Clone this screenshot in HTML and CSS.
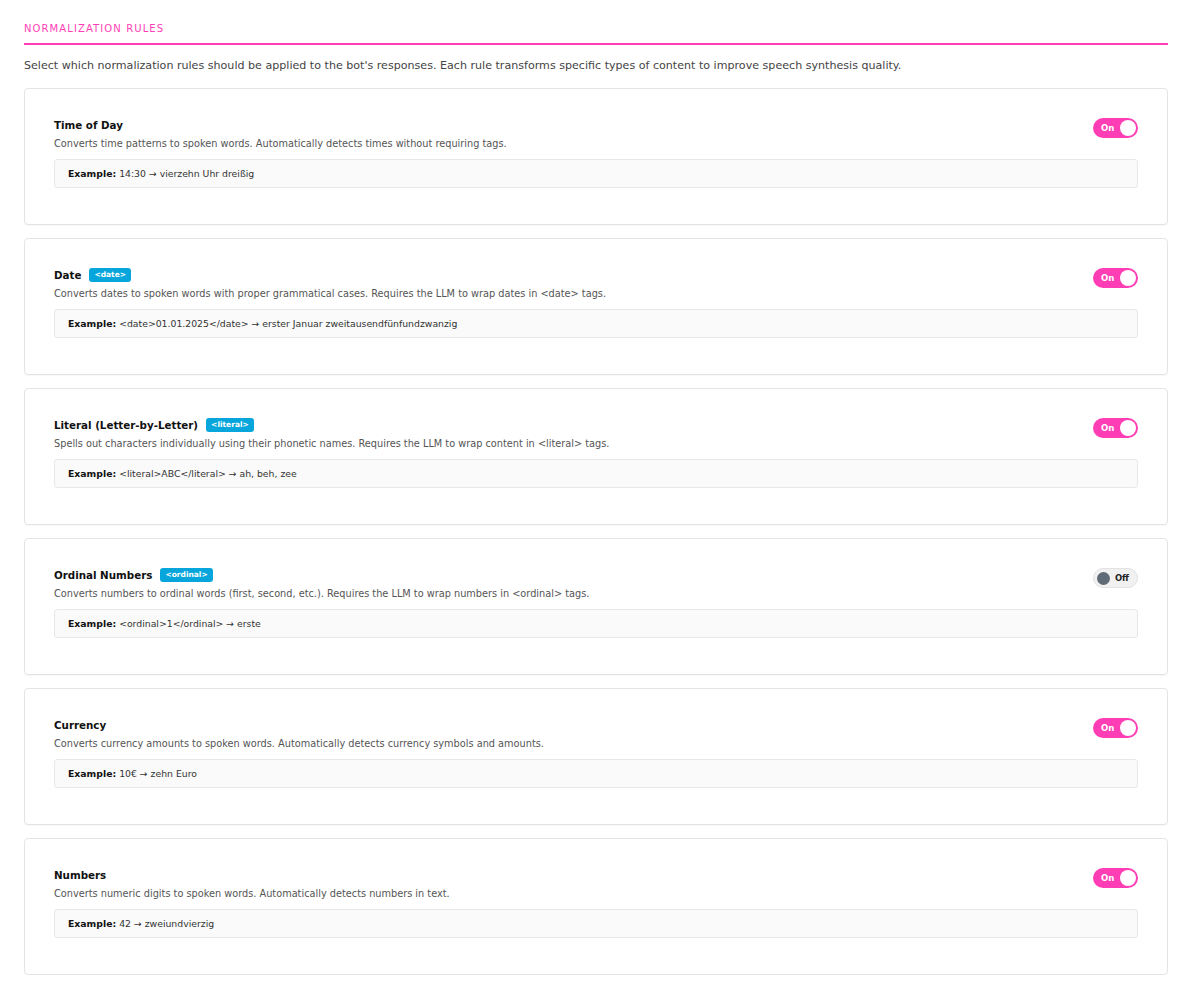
FILE: index.html
```html
<!DOCTYPE html>
<html lang="en">
  <head>
    <meta charset="UTF-8" />
    <meta name="viewport" content="width=device-width, initial-scale=1.0" />
    <title>Normalization Rules</title>
    <link rel="stylesheet" href="styles.css">
  </head>
  <body>
    <div class="page">
      <!-- Section header -->
      <h2 class="section-title">Normalization Rules</h2>
      <p class="section-desc">
        Select which normalization rules should be applied to the bot's responses. Each rule transforms specific types of content to improve speech synthesis quality.
      </p>

      <div class="rule-list">
        <div class="rule-card">
          <div class="rule-head">
            <div class="rule-info">
              <div class="rule-title">Time of Day</div>
              <div class="rule-text">Converts time patterns to spoken words. Automatically detects times without requiring tags.</div>
            </div>
            <button class="toggle on"><span class="toggle-label">On</span><span class="knob"></span></button>
          </div>
          <div class="example"><b>Example:</b> 14:30 → vierzehn Uhr dreißig</div>
        </div>

        <div class="rule-card">
          <div class="rule-head">
            <div class="rule-info">
              <div class="rule-title">Date <span class="tag">&lt;date&gt;</span></div>
              <div class="rule-text">Converts dates to spoken words with proper grammatical cases. Requires the LLM to wrap dates in &lt;date&gt; tags.</div>
            </div>
            <button class="toggle on"><span class="toggle-label">On</span><span class="knob"></span></button>
          </div>
          <div class="example"><b>Example:</b> &lt;date&gt;01.01.2025&lt;/date&gt; → erster Januar zweitausendfünfundzwanzig</div>
        </div>

        <div class="rule-card">
          <div class="rule-head">
            <div class="rule-info">
              <div class="rule-title">Literal (Letter-by-Letter) <span class="tag">&lt;literal&gt;</span></div>
              <div class="rule-text">Spells out characters individually using their phonetic names. Requires the LLM to wrap content in &lt;literal&gt; tags.</div>
            </div>
            <button class="toggle on"><span class="toggle-label">On</span><span class="knob"></span></button>
          </div>
          <div class="example"><b>Example:</b> &lt;literal&gt;ABC&lt;/literal&gt; → ah, beh, zee</div>
        </div>

        <div class="rule-card">
          <div class="rule-head">
            <div class="rule-info">
              <div class="rule-title">Ordinal Numbers <span class="tag">&lt;ordinal&gt;</span></div>
              <div class="rule-text">Converts numbers to ordinal words (first, second, etc.). Requires the LLM to wrap numbers in &lt;ordinal&gt; tags.</div>
            </div>
            <button class="toggle off"><span class="knob"></span><span class="toggle-label">Off</span></button>
          </div>
          <div class="example"><b>Example:</b> &lt;ordinal&gt;1&lt;/ordinal&gt; → erste</div>
        </div>

        <div class="rule-card">
          <div class="rule-head">
            <div class="rule-info">
              <div class="rule-title">Currency</div>
              <div class="rule-text">Converts currency amounts to spoken words. Automatically detects currency symbols and amounts.</div>
            </div>
            <button class="toggle on"><span class="toggle-label">On</span><span class="knob"></span></button>
          </div>
          <div class="example"><b>Example:</b> 10€ → zehn Euro</div>
        </div>

        <div class="rule-card">
          <div class="rule-head">
            <div class="rule-info">
              <div class="rule-title">Numbers</div>
              <div class="rule-text">Converts numeric digits to spoken words. Automatically detects numbers in text.</div>
            </div>
            <button class="toggle on"><span class="toggle-label">On</span><span class="knob"></span></button>
          </div>
          <div class="example"><b>Example:</b> 42 → zweiundvierzig</div>
        </div>
      </div>
    </div>
  </body>
</html>
```

FILE: styles.css
```css
/* Base */
body {
  margin: 0;
  background: #ffffff;
  font-family: 'DejaVu Sans', 'Noto Sans', sans-serif;
  color: #1a1a1a;
}

.page {
  padding: 22px 16px 0 24px;
}

/* Section header */
.section-title {
  margin: 0;
  color: #ff3eb5;
  font-size: 10px;
  font-weight: normal;
  letter-spacing: 1.1px;
  text-transform: uppercase;
  line-height: 14px;
}

/* pink rule under the title */
.section-title::after {
  content: '';
  display: block;
  height: 2px;
  margin-top: 7px;
  background: #ff3eb5;
}

.section-desc {
  margin: 13px 0 14px;
  font-size: 11.1px;
  line-height: 16px;
  color: #444;
}

/* Rule cards */
.rule-list {
  display: flex;
  flex-direction: column;
  gap: 13px;
}

.rule-card {
  border: 1px solid #e4e4e4;
  border-radius: 4px;
  padding: 28px 29px 36px 29px;
  box-shadow: 0 1px 1px rgba(0, 0, 0, 0.03);
}

.rule-head {
  display: flex;
  justify-content: space-between;
  align-items: flex-start;
}

.rule-title {
  display: flex;
  align-items: center;
  gap: 8px;
  font-size: 10.3px;
  font-weight: bold;
  line-height: 16px;
  color: #111;
}

.tag {
  display: inline-block;
  background: #06a6dc;
  color: #fff;
  font-size: 7.5px;
  font-weight: bold;
  line-height: 14px;
  padding: 0 5px;
  border-radius: 3px;
}

.rule-text {
  margin-top: 3px;
  font-size: 9.75px;
  line-height: 15px;
  color: #555;
}

/* Example box */
.example {
  margin-top: 8px;
  padding: 7px 13px;
  background: #fafafa;
  border: 1px solid #e8e8e8;
  border-radius: 3px;
  font-size: 9.3px;
  line-height: 13px;
  color: #333;
}

.example b {
  color: #111;
}

/* Toggle switch */
.toggle {
  display: flex;
  align-items: center;
  justify-content: space-between;
  width: 45px;
  height: 20px;
  margin-top: 1px;
  padding: 0 2px 0 8px;
  border: none;
  border-radius: 10px;
  font-family: inherit;
  font-size: 8.5px;
  font-weight: bold;
  cursor: pointer;
  box-sizing: border-box;
}

.toggle .knob {
  width: 16px;
  height: 16px;
  border-radius: 50%;
}

.toggle.on {
  background: #ff3eb5;
  color: #fff;
}

.toggle.on .knob {
  background: #fff;
}

.toggle.off {
  background: #f1f1f1;
  border: 1px solid #e2e2e2;
  color: #222;
  padding: 0 8px 0 3px;
}

.toggle.off .knob {
  width: 13px;
  height: 13px;
  background: #5f6b76;
}
```
